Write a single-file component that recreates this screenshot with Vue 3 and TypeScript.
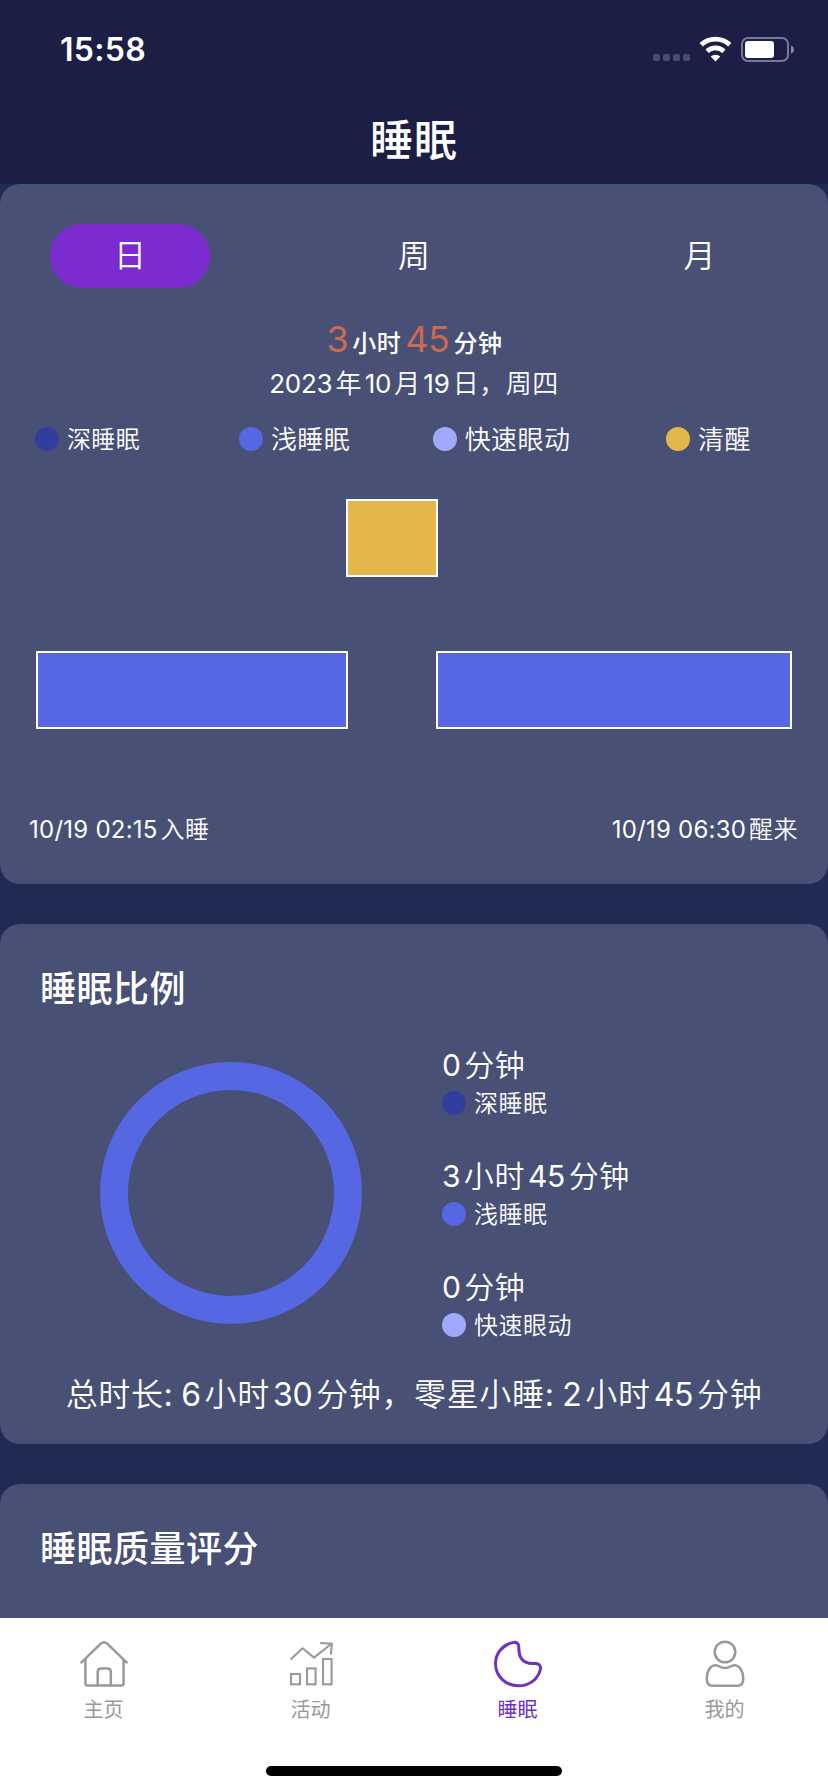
<script setup lang="ts">
import { ref, defineComponent, h } from 'vue'

type StageKey = 'deep' | 'light' | 'rem' | 'awake'

interface Stage {
  key: StageKey
  name: string
}

// Splits a string into latin and Chinese runs so each can carry its own spacing.
const Mixed = defineComponent({
  props: { text: { type: String, required: true } },
  setup(props) {
    return () => {
      const runs = props.text.match(/[0-9:/ ]+|[^0-9:/ ]+/g) ?? []
      return h(
        'span',
        { class: 'mixed' },
        runs.map((run) => h('span', { class: /[0-9]/.test(run) ? 'num' : 'cjk' }, run)),
      )
    }
  },
})

const periods = ['日', '周', '月']
const activePeriod = ref(0)

const stages: Stage[] = [
  { key: 'deep', name: '深睡眠' },
  { key: 'light', name: '浅睡眠' },
  { key: 'rem', name: '快速眼动' },
  { key: 'awake', name: '清醒' },
]

const segments: { key: StageKey; x: number; y: number; width: number }[] = [
  { key: 'light', x: 0, y: 152, width: 312 },
  { key: 'awake', x: 310, y: 0, width: 92 },
  { key: 'light', x: 400, y: 152, width: 356 },
]

const shares: (Stage & { duration: string })[] = [
  { key: 'deep', name: '深睡眠', duration: '0分钟' },
  { key: 'light', name: '浅睡眠', duration: '3小时45分钟' },
  { key: 'rem', name: '快速眼动', duration: '0分钟' },
]

const navItems = [
  { id: 'home', label: '主页' },
  { id: 'activity', label: '活动' },
  { id: 'sleep', label: '睡眠' },
  { id: 'me', label: '我的' },
]
const activeNav = ref('sleep')
</script>

<template>
  <div class="screen">
    <header class="top">
      <div class="status">
        <span class="clock">15:58</span>
        <svg class="status-icons" width="144" height="28" viewBox="0 0 144 28">
          <g fill="#4a4b70">
            <rect x="3" y="18" width="7" height="7" rx="2" />
            <rect x="13" y="18" width="7" height="7" rx="2" />
            <rect x="23" y="18" width="7" height="7" rx="2" />
            <rect x="33" y="18" width="7" height="7" rx="2" />
          </g>
          <g fill="none" stroke="#fff" stroke-width="4.8">
            <path d="M51.2 8.8 A21 21 0 0 1 79.8 8.8" />
            <path d="M57.1 15.2 A12.4 12.4 0 0 1 73.9 15.2" />
          </g>
          <path d="M65.5 25.4 L60.7 20.6 A7 7 0 0 1 70.3 20.6 Z" fill="#fff" />
          <rect x="92" y="2" width="46" height="23" rx="6" fill="none" stroke="#77789a" stroke-width="2" />
          <rect x="95" y="5" width="29" height="17" rx="3" fill="#fff" />
          <path d="M141 9.5 q3 1 3 4 q0 3 -3 4 z" fill="#8687a5" />
        </svg>
      </div>
      <h1 class="title">睡眠</h1>
    </header>

    <main class="content">
      <section class="card overview">
        <div class="periods">
          <button
            v-for="(p, i) in periods"
            :key="p"
            class="period"
            :class="{ active: i === activePeriod }"
            @click="activePeriod = i"
          >{{ p }}</button>
        </div>

        <p class="total">
          <b>3</b><span class="unit">小时</span><b>45</b><span class="unit">分钟</span>
        </p>
        <p class="date"><Mixed text="2023年10月19日，周四" /></p>

        <ul class="legend">
          <li v-for="s in stages" :key="s.key" :class="s.key">
            <i class="dot" :class="s.key"></i><span>{{ s.name }}</span>
          </li>
        </ul>

        <svg class="timeline" width="756" height="230" viewBox="0 0 756 230">
          <rect
            v-for="(b, i) in segments"
            :key="i"
            :x="b.x + 1"
            :y="b.y + 1"
            :width="b.width - 2"
            height="76"
            class="bar"
            :class="b.key"
          />
        </svg>

        <div class="range">
          <Mixed text="10/19 02:15入睡" />
          <Mixed text="10/19 06:30醒来" />
        </div>
      </section>

      <section class="card ratio">
        <h2>睡眠比例</h2>
        <div class="ratio-body">
          <svg class="ring" width="262" height="262" viewBox="0 0 262 262">
            <circle cx="131" cy="131" r="117" fill="none" stroke="#5567e2" stroke-width="28" />
          </svg>
          <div class="shares">
            <div v-for="s in shares" :key="s.key" class="share">
              <p class="share-time"><Mixed :text="s.duration" /></p>
              <p class="share-name"><i class="dot" :class="s.key"></i><span>{{ s.name }}</span></p>
            </div>
          </div>
        </div>
        <p class="summary"><Mixed text="总时长" /><Mixed text=": 6小时30分钟，零星小睡" /><Mixed text=": 2小时45分钟" /></p>
      </section>

      <section class="card quality">
        <h2>睡眠质量评分</h2>
      </section>
    </main>

    <nav class="nav">
      <div class="nav-items">
        <a
          v-for="n in navItems"
          :key="n.id"
          class="nav-item"
          :class="{ active: n.id === activeNav }"
          @click="activeNav = n.id"
        >
          <svg width="50" height="50" viewBox="0 0 50 50" fill="none" stroke="currentColor" stroke-width="2.5" stroke-linecap="round" stroke-linejoin="round">
            <template v-if="n.id === 'home'">
              <path d="M2.4 22.4 L21.8 3.6 Q25 .9 28.2 3.6 L47.6 22.4" />
              <path d="M6.4 20 V43 Q6.4 45.6 9 45.6 H42 Q44.6 45.6 44.6 43 V20" />
              <path d="M18.7 45 V32 Q18.7 28.6 22 28.6 H28.5 Q31.8 28.6 31.8 32 V45" />
            </template>
            <template v-else-if="n.id === 'activity'">
              <g stroke-width="2.1" stroke-linecap="butt" stroke-linejoin="miter">
                <path d="M4.6 19.6 L16.6 8.3 L28 17.6 L45.4 3.8" stroke-linejoin="round" />
                <path d="M34.2 3 L45.8 3.7 L44.9 14.6" />
                <rect x="5" y="34" width="9" height="10.3" />
                <rect x="21" y="28.4" width="8.6" height="15.9" />
                <rect x="37" y="19" width="8.6" height="25.3" />
              </g>
            </template>
            <template v-else-if="n.id === 'sleep'">
              <path stroke-width="3" d="M19.6 2.6 C23.3 1.6 25.6 3.4 25.8 7 C26 12 25.6 14.5 28.2 18.4 C31.2 22.8 35.5 23.8 41 23.5 C45.5 23.2 48 24.8 47.4 29 C45.6 38.8 36.5 45.8 25.5 45.8 C12.5 45.8 2.5 36 2.5 23.5 C2.5 13 9.8 4.9 19.6 2.6 Z" />
            </template>
            <template v-else>
              <circle cx="25" cy="12" r="10.3" />
              <path d="M15.8 25.2 C18.2 25.2 20.3 28 25 28 C29.7 28 31.8 25.2 34.2 25.2 C39.8 25.2 43.3 31.5 43.3 38.5 C43.3 43.5 41.3 45.8 37.3 45.8 H12.7 C8.7 45.8 6.7 43.5 6.7 38.5 C6.7 31.5 10.2 25.2 15.8 25.2 Z" />
            </template>
          </svg>
          <span>{{ n.label }}</span>
        </a>
      </div>
      <div class="home-indicator"></div>
    </nav>
  </div>
</template>

<style>
body {
  margin: 0;
  background: #222a57;
}
</style>

<style scoped>
.screen {
  width: 828px;
  height: 1792px;
  display: flex;
  flex-direction: column;
  overflow: hidden;
  background: #212a55;
  color: #fff;
  font-family: Inter, 'Noto Sans CJK SC', sans-serif;
}
p, h1, h2, ul {
  margin: 0;
  padding: 0;
}
.top {
  height: 184px;
  flex: none;
  background: #1c1e46;
}
.status {
  height: 96px;
  display: flex;
  justify-content: space-between;
  padding: 0 34px 0 60px;
}
.clock {
  font-size: 32px;
  font-weight: 600;
  line-height: 40px;
  padding-top: 30px;
  letter-spacing: 0.3px;
}
.status-icons {
  margin-top: 36px;
}
.title {
  font-size: 43px;
  font-weight: 500;
  line-height: 60px;
  text-align: center;
  padding-top: 14px;
  letter-spacing: 1px;
}
.content {
  flex: 1;
  min-height: 0;
  display: flex;
  flex-direction: column;
  gap: 40px;
  overflow: hidden;
}
.card {
  flex: none;
  box-sizing: border-box;
  border-radius: 20px;
  background: #485076;
}
.overview {
  height: 700px;
  padding-top: 40px;
}
.periods {
  display: flex;
  justify-content: space-between;
  padding: 0 50px;
}
.period {
  width: 160px;
  height: 64px;
  border: 0;
  border-radius: 32px;
  padding: 0;
  background: none;
  color: inherit;
  font: 350 32px/62px Inter, 'Noto Sans CJK SC', sans-serif;
}
.period:last-child {
  padding-left: 3px;
}
.period.active {
  background: #7c2bd0;
}
.total {
  display: flex;
  justify-content: center;
  align-items: baseline;
  height: 44px;
  margin-top: 29px;
  padding-left: 5px;
  line-height: 44px;
}
.total b {
  font-size: 36px;
  font-weight: 400;
  letter-spacing: -0.4px;
  color: #cb6a51;
}
.total .unit {
  font-size: 24px;
  font-weight: 500;
  letter-spacing: 0.5px;
  margin: 0 4px;
}
.date {
  height: 36px;
  margin-top: 5px;
  font-size: 26px;
  line-height: 36px;
  text-align: center;
}
:deep(.mixed) {
  white-space: pre;
}
:deep(.cjk) {
  letter-spacing: 0.02em;
  font-weight: 350;
}
:deep(.num) {
  font-weight: 400;
  letter-spacing: -0.01em;
}
:deep(.num + .cjk) {
  margin-left: 0.12em;
}
:deep(.cjk + .num) {
  margin-left: 0.1em;
}
.legend {
  display: grid;
  grid-template-columns: repeat(4, 207px);
  list-style: none;
  margin-top: 17px;
}
.legend li {
  display: flex;
  align-items: center;
  justify-content: center;
  height: 40px;
  padding-right: 32px;
  font-size: 26px;
  line-height: 40px;
  letter-spacing: 0.4px;
}
.legend li.deep {
  font-size: 24px;
}
.legend span,
.share-name span {
  font-weight: 350;
  padding-top: 2px;
}
.dot {
  width: 24px;
  height: 24px;
  border-radius: 50%;
  margin-right: 8px;
}
.dot.deep { background: #323e9e; }
.dot.light { background: #5567e2; }
.dot.rem { background: #9fa9fb; }
.dot.awake { background: #e4b74a; }
.timeline {
  display: block;
  margin: 40px 36px 0;
}
.bar {
  stroke: #fff;
  stroke-width: 2;
}
.bar.light { fill: #5567e2; }
.bar.awake { fill: #e4b74a; }
.range {
  display: flex;
  justify-content: space-between;
  padding: 0 30px 0 29px;
  margin-top: 84px;
  font-size: 24px;
  line-height: 34px;
}
.range :deep(.num) {
  letter-spacing: 0.01em;
}
h2 {
  font-size: 36px;
  font-weight: 500;
  line-height: 50px;
  letter-spacing: 0.5px;
  padding-left: 40px;
}
.ratio {
  height: 520px;
  padding-top: 40px;
}
.ratio-body {
  display: flex;
  padding: 29px 0 0 100px;
}
.ring {
  flex: none;
  margin-top: 19px;
}
.shares {
  margin-left: 80px;
  display: flex;
  flex-direction: column;
  gap: 36px;
}
.share {
  height: 75px;
}
.share-time {
  font-size: 30px;
  line-height: 44px;
  height: 45px;
}
.share-name {
  display: flex;
  align-items: center;
  height: 30px;
  font-size: 24px;
  line-height: 30px;
  letter-spacing: 0.5px;
}
.summary {
  margin-top: 33px;
  font-size: 32px;
  line-height: 44px;
  text-align: center;
  white-space: nowrap;
}
.quality {
  height: 300px;
  padding-top: 40px;
}
.nav {
  flex: none;
  height: 174px;
  background: #fff;
}
.nav-items {
  display: grid;
  grid-template-columns: repeat(4, 207px);
  height: 148px;
}
.nav-item {
  display: flex;
  flex-direction: column;
  align-items: center;
  padding-top: 22px;
  color: #999;
  font-size: 20px;
  line-height: 28px;
}
.nav-item svg {
  display: block;
}
.nav-item span {
  margin-top: 6px;
}
.nav-item.active {
  color: #7030c0;
}
.home-indicator {
  width: 296px;
  height: 10px;
  margin: 0 auto;
  border-radius: 5px;
  background: #000;
}
</style>
